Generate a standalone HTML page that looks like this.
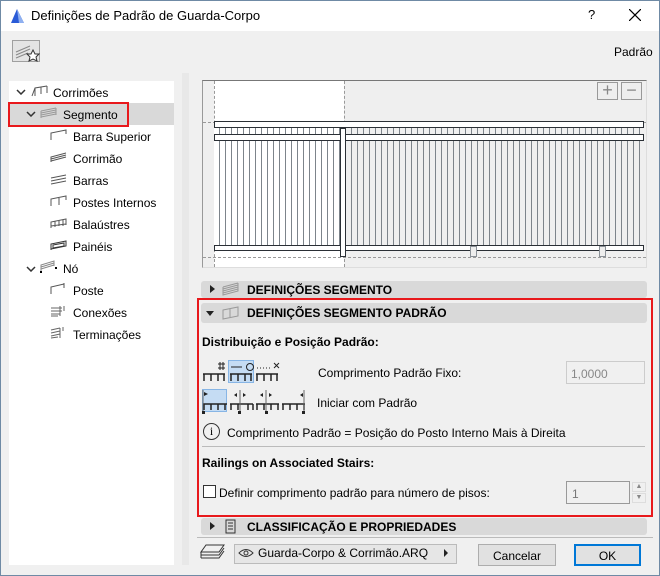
<!DOCTYPE html>
<html><head><meta charset="utf-8"><style>
*{margin:0;padding:0;box-sizing:border-box}
body{width:660px;height:576px;overflow:hidden;background:#f0f0f0;font-family:"Liberation Sans",sans-serif;font-size:12px;color:#000;position:relative}
.a{position:absolute}
.win{left:0;top:0;width:660px;height:576px;border:1px solid #6f8aa5}
.title{left:1px;top:1px;width:658px;height:30px;background:#fff}
.tree .it{position:absolute;white-space:nowrap;font-size:12px}
.hdr{background:#d9d9d9;border-radius:3px;font-weight:bold;font-size:12px}
.btn{border:1px solid #adadad;background:#e1e1e1;text-align:center}
</style></head><body>
<div class="a win"></div>
<div class="a title"></div>
<svg class="a" style="left:10px;top:8px" width="16" height="16"><rect width="16" height="16" fill="#fff"/><path d="M1 15 L7 1 L14 15 Z" fill="#2a5bd7"/><path d="M7 1 L14 15 H9 Z" fill="#8fb0f0"/></svg>
<div class="a" style="left:31px;top:8px;font-size:13px">Definições de Padrão de Guarda-Corpo</div>
<div class="a" style="left:588px;top:7px;font-size:13px">?</div>
<svg class="a" style="left:629px;top:9px" width="12" height="12"><path d="M0 0 L12 12 M12 0 L0 12" stroke="#000" stroke-width="1.2"/></svg>
<div class="a" style="left:12px;top:40px;width:28px;height:22px;border:1px solid #a0a0a0;background:#e4e4e4"></div>
<svg class="a" style="left:14px;top:42px" width="26" height="20"><path d="M2 10 L16 4 M2 13 L16 7 M2 16 L14 11" stroke="#888" fill="none"/><path d="M19 8 L21 12 L25 12 L22 15 L23 19 L19 17 L15 19 L16 15 L13 12 L17 12 Z" fill="#fff" stroke="#333"/></svg>
<div class="a" style="left:614px;top:45px">Padrão</div>

<div class="a" style="left:9px;top:81px;width:165px;height:484px;background:#fff"></div>
<div class="a" style="left:9px;top:103px;width:165px;height:22px;background:#d9d9d9"></div>
<div class="a" style="left:8px;top:102px;width:121px;height:25px;border:2px solid #e8191c"></div>
<div class="tree">
<svg class="a" style="left:16px;top:89px" width="10" height="6"><path d="M1 1 L5 5 L9 1" stroke="#333" stroke-width="1.5" fill="none"/></svg>
<svg class="a" style="left:31px;top:85px" width="18" height="12"><path d="M1 11 L4 3 L16 1 M4 3 V11 M10 2 V9 M16 1 V8" stroke="#555" fill="none"/></svg>
<div class="it" style="left:53px;top:86px">Corrimões</div>
<svg class="a" style="left:26px;top:111px" width="10" height="6"><path d="M1 1 L5 5 L9 1" stroke="#333" stroke-width="1.5" fill="none"/></svg>
<svg class="a" style="left:40px;top:107px" width="18" height="12"><path d="M1 4 L16 1 M1 6 L16 3 M1 8 L16 5 M1 10 L16 7 M1 4 V11 M16 1 V8" stroke="#999" fill="none"/></svg>
<div class="it" style="left:63px;top:108px">Segmento</div>
<svg class="a" style="left:50px;top:129px" width="18" height="12"><path d="M1 11 V4 L16 1 V5" stroke="#555" fill="none"/></svg><div class="it" style="left:73px;top:130px">Barra Superior</div>
<svg class="a" style="left:50px;top:151px" width="18" height="12"><path d="M1 11 V6 L16 2 M1 8 L16 4 M1 10 L16 6" stroke="#555" fill="none"/></svg><div class="it" style="left:73px;top:152px">Corrimão</div>
<svg class="a" style="left:50px;top:173px" width="18" height="12"><path d="M1 5 L16 2 M1 8 L16 5 M1 11 L16 8" stroke="#555" fill="none"/></svg><div class="it" style="left:73px;top:174px">Barras</div>
<svg class="a" style="left:50px;top:195px" width="18" height="12"><path d="M1 11 V4 L16 1 V5 M9 3 V10" stroke="#555" fill="none"/></svg><div class="it" style="left:73px;top:196px">Postes Internos</div>
<svg class="a" style="left:50px;top:217px" width="18" height="12"><path d="M1 11 V5 L16 2 V8 M5 4 V10 M9 3 V9 M13 3 V9 M1 9 L16 7" stroke="#555" fill="none"/></svg><div class="it" style="left:73px;top:218px">Balaústres</div>
<svg class="a" style="left:50px;top:239px" width="18" height="12"><path d="M1 11 V5 L16 2 V7 L1 10 M3 6 L14 4 L14 7 L3 9Z" stroke="#333" fill="none"/></svg><div class="it" style="left:73px;top:240px">Painéis</div>
<svg class="a" style="left:26px;top:266px" width="10" height="6"><path d="M1 1 L5 5 L9 1" stroke="#333" stroke-width="1.5" fill="none"/></svg>
<svg class="a" style="left:40px;top:260px" width="18" height="14"><path d="M1 12 V5 L14 1 V6 M1 7 L14 3 M1 9 L14 5" stroke="#888" fill="none"/><rect x="0" y="11" width="2" height="2" fill="#000"/><rect x="15" y="7" width="2" height="2" fill="#000"/></svg>
<div class="it" style="left:63px;top:262px">Nó</div>
<svg class="a" style="left:50px;top:283px" width="18" height="12"><path d="M1 11 V4 L14 1 M14 0 V5" stroke="#555" fill="none"/></svg><div class="it" style="left:73px;top:284px">Poste</div>
<svg class="a" style="left:50px;top:305px" width="18" height="12"><path d="M1 3 H12 M1 6 H12 M1 9 H10 M1 11 H8 M10 1 V11 M14 1 V6" stroke="#666" fill="none"/></svg><div class="it" style="left:73px;top:306px">Conexões</div>
<svg class="a" style="left:50px;top:327px" width="18" height="12"><path d="M1 3 L10 1 M1 6 L10 4 M1 9 L10 7 M1 11 L8 10 M10 1 V11 M13 0 V4" stroke="#666" fill="none"/></svg><div class="it" style="left:73px;top:328px">Terminações</div>
</div>

<div class="a" style="left:182px;top:73px;width:7px;height:492px;background:#e8e8e8"></div>

<!-- preview -->
<div class="a" style="left:202px;top:80px;width:445px;height:188px;background:#efefef;border-top:1px solid #777;border-left:1px solid #999;border-right:1px solid #ddd;border-bottom:1px solid #ddd"></div>
<div class="a" style="left:214px;top:81px;width:130px;height:186px;background:#fff"></div>
<div class="a" style="left:214px;top:81px;height:186px;border-left:1px dashed #999"></div>
<div class="a" style="left:344px;top:81px;height:186px;border-left:1px dashed #999"></div>
<div class="a" style="left:203px;top:122px;width:443px;border-top:1px dashed #999"></div>
<div class="a" style="left:203px;top:257px;width:443px;border-top:1px dashed #999"></div>
<div class="a" style="left:214px;top:128px;width:430px;height:117px;background:repeating-linear-gradient(90deg,transparent 0 5px,#7d848b 5px 6px)"></div>
<div class="a" style="left:214px;top:128px;width:130px;height:117px;background:repeating-linear-gradient(90deg,#fff 0 5px,#7d848b 5px 6px)"></div>
<div class="a" style="left:214px;top:121px;width:430px;height:7px;border:1px solid #2a2f35;background:#fff"></div>
<div class="a" style="left:214px;top:134px;width:430px;height:7px;border:1px solid #2a2f35;background:#fff"></div>
<div class="a" style="left:214px;top:245px;width:430px;height:6px;border:1px solid #2a2f35;background:#fff"></div>
<div class="a" style="left:340px;top:128px;width:6px;height:129px;border:1px solid #2a2f35;background:#fff"></div>
<div class="a" style="left:470px;top:246px;width:7px;height:11px;border:1px solid #8a9097;background:#eee"></div>
<div class="a" style="left:599px;top:246px;width:7px;height:11px;border:1px solid #8a9097;background:#eee"></div>
<div class="a" style="left:597px;top:82px;width:21px;height:18px;border:1px solid #999;background:#eee;color:#888;text-align:center;font-size:18px;line-height:15px">+</div>
<div class="a" style="left:621px;top:82px;width:21px;height:18px;border:1px solid #999;background:#eee;color:#888;text-align:center;font-size:18px;line-height:15px">−</div>

<!-- sections -->
<div class="a hdr" style="left:201px;top:281px;width:446px;height:17px"></div>
<div class="a" style="left:210px;top:285px;width:0;height:0;border-left:5px solid #222;border-top:4px solid transparent;border-bottom:4px solid transparent"></div>
<svg class="a" style="left:222px;top:282px" width="18" height="14"><path d="M1 5 L16 1 M1 7 L16 3 M1 9 L16 5 M1 11 L16 7 M1 5 V13 L16 9 V1" stroke="#999" fill="none"/></svg>
<div class="a" style="left:247px;top:283px;font-weight:bold">DEFINIÇÕES SEGMENTO</div>

<div class="a" style="left:197px;top:298px;width:456px;height:219px;border:2px solid #e8191c"></div>
<div class="a hdr" style="left:201px;top:303px;width:446px;height:20px"></div>
<div class="a" style="left:206px;top:311px;width:0;height:0;border-top:5px solid #222;border-left:4px solid transparent;border-right:4px solid transparent"></div>
<svg class="a" style="left:222px;top:305px" width="18" height="15"><path d="M1 5 L16 2 V11 L1 14 Z M8 4 V12" stroke="#999" fill="none"/></svg>
<div class="a" style="left:247px;top:306px;font-weight:bold">DEFINIÇÕES SEGMENTO PADRÃO</div>
<div class="a" style="left:202px;top:335px;font-weight:bold">Distribuição e Posição Padrão:</div>

<div class="a" style="left:228px;top:360px;width:26px;height:23px;background:#c5dcf3;border:1px solid #87b5e5"></div>
<div class="a" style="left:202px;top:389px;width:25px;height:23px;background:#c5dcf3;border:1px solid #87b5e5"></div>
<svg class="a" style="left:200px;top:358px" width="115" height="60"><g stroke="#222" fill="none" stroke-width="1.5"><path d="M3 16 H25 M4 16 V23 M11 16 V23 M18 16 V23 M24 16 V23"/><path d="M30 16 H52 M31 16 V23 M38 16 V23 M45 16 V23 M51 16 V23"/><path d="M56 16 H78 M57 16 V23 M64 16 V23 M71 16 V23 M77 16 V23"/><path d="M3 46 H27 M4 46 V52 M11 46 V52 M18 46 V52 M25 46 V52"/><path d="M30 46 H53 M31 46 V52 M38 46 V52 M48 46 V52 M53 46 V52"/><path d="M56 46 H79 M57 46 V52 M64 46 V52 M71 46 V52 M78 46 V52"/><path d="M82 46 H105 M83 46 V52 M90 46 V52 M97 46 V52 M104 46 V52"/></g>
<g stroke="#222" stroke-width="1"><path d="M31 9 H42"/><path d="M57 10 H70" stroke-dasharray="1 2"/><path d="M20 4 V12 M23 4 V12 M18 6 H25 M18 10 H25"/><circle cx="50" cy="9" r="3.5" fill="none"/><path d="M74 5 L79 10 M79 5 L74 10"/><path d="M3 32 V54 M40 32 V54 M66 32 V54 M104 32 V54" stroke="#666"/></g>
<g fill="#222"><path d="M4 34 L8 36 L4 38Z M37 35 L34 37 L37 39Z M43 35 L46 37 L43 39Z M63 35 L60 37 L63 39Z M69 35 L72 37 L69 39Z M103 35 L100 37 L103 39Z"/><rect x="2" y="53" width="3" height="3"/><rect x="38" y="53" width="3" height="3"/><rect x="65" y="53" width="3" height="3"/><rect x="102" y="53" width="3" height="3"/></g></svg>

<div class="a" style="left:318px;top:366px">Comprimento Padrão Fixo:</div>
<div class="a" style="left:566px;top:361px;width:79px;height:23px;border:1px solid #ccc;background:#f0f0f0;color:#888;padding:5px 0 0 4px">1,0000</div>
<div class="a" style="left:317px;top:396px">Iniciar com Padrão</div>
<div class="a" style="left:203px;top:423px;width:17px;height:17px;border:1.5px solid #333;border-radius:50%;text-align:center;font-size:12px;line-height:14px;font-family:'Liberation Serif',serif">i</div>
<div class="a" style="left:227px;top:426px">Comprimento Padrão = Posição do Posto Interno Mais à Direita</div>
<div class="a" style="left:202px;top:446px;width:443px;border-top:1px solid #bbb"></div>
<div class="a" style="left:202px;top:456px;font-weight:bold">Railings on Associated Stairs:</div>
<div class="a" style="left:203px;top:485px;width:13px;height:13px;border:1px solid #333;background:#fff"></div>
<div class="a" style="left:219px;top:486px">Definir comprimento padrão para número de pisos:</div>
<div class="a" style="left:566px;top:481px;width:64px;height:23px;border:1px solid #999;background:#f0f0f0;color:#777;padding:5px 0 0 5px">1</div>
<div class="a" style="left:632px;top:482px;width:14px;height:10px;border:1px solid #ddd;font-size:7px;color:#888;text-align:center;line-height:8px">▲</div>
<div class="a" style="left:632px;top:493px;width:14px;height:10px;border:1px solid #ddd;font-size:7px;color:#888;text-align:center;line-height:8px">▼</div>

<div class="a hdr" style="left:201px;top:518px;width:446px;height:17px"></div>
<div class="a" style="left:210px;top:522px;width:0;height:0;border-left:5px solid #222;border-top:4px solid transparent;border-bottom:4px solid transparent"></div>
<svg class="a" style="left:225px;top:519px" width="12" height="15"><rect x="1" y="1" width="9" height="13" fill="none" stroke="#333"/><path d="M3 4 H8 M3 7 H8 M3 10 H8" stroke="#333"/></svg>
<div class="a" style="left:247px;top:520px;font-weight:bold">CLASSIFICAÇÃO E PROPRIEDADES</div>
<div class="a" style="left:197px;top:537px;width:456px;border-top:1px solid #bbb"></div>

<svg class="a" style="left:199px;top:544px" width="26" height="18"><path d="M7 1 H25 L20 8 H2 Z M2 11 H20 L25 4 M2 14 H20 L25 7 M2 8 V14" stroke="#333" fill="none"/></svg>
<div class="a" style="left:234px;top:544px;width:223px;height:20px;border:1px solid #bbb;background:#e6e6e6"></div>
<svg class="a" style="left:238px;top:547px" width="16" height="12"><path d="M1 6 Q8 -1 15 6 Q8 13 1 6Z" fill="none" stroke="#333"/><circle cx="8" cy="6" r="2" fill="none" stroke="#333"/></svg>
<div class="a" style="left:258px;top:546px">Guarda-Corpo &amp; Corrimão.ARQ</div>
<div class="a" style="left:444px;top:549px;width:0;height:0;border-left:4px solid #222;border-top:4px solid transparent;border-bottom:4px solid transparent"></div>
<div class="a btn" style="left:478px;top:544px;width:78px;height:22px;padding-top:4px">Cancelar</div>
<div class="a btn" style="left:574px;top:544px;width:67px;height:22px;border:2px solid #0078d7;padding-top:3px">OK</div>
</body></html>
